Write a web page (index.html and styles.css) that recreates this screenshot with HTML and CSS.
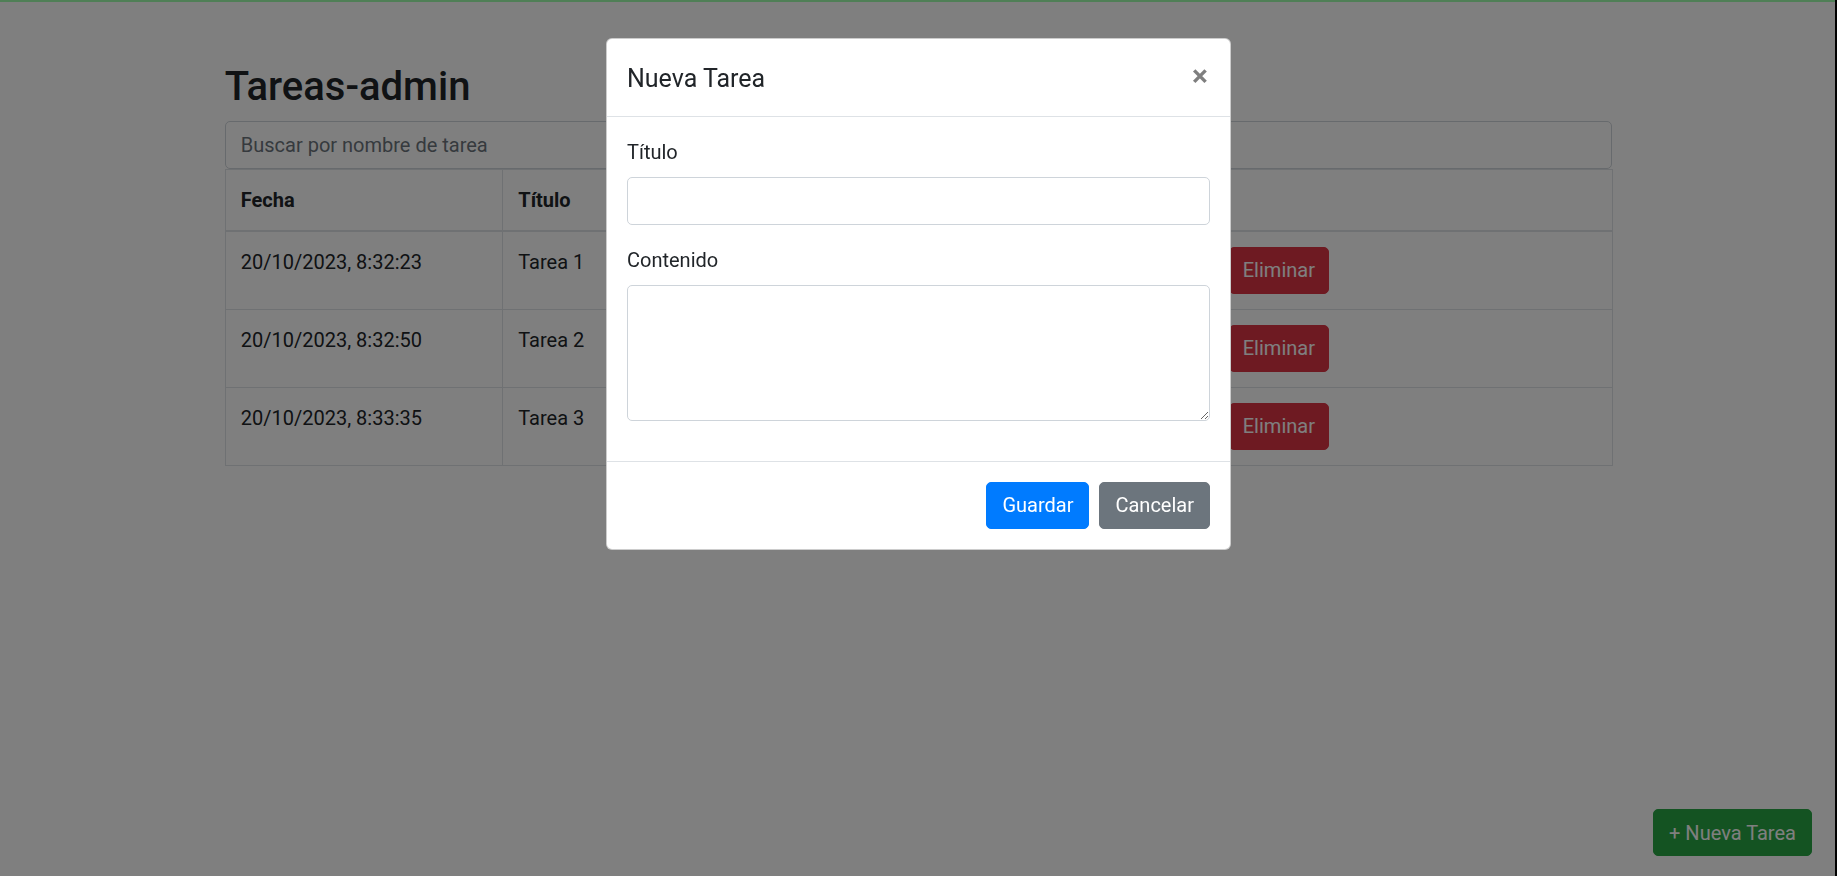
FILE: index.html
```html
<!DOCTYPE html>
<html lang="es">
<head>
<meta charset="utf-8">
<title>Tareas-admin</title>
<link rel="stylesheet" href="styles.css">
</head>
<body>
<div class="topbar"></div>
<main class="container">
  <h2 class="page-title">Tareas-admin</h2>
  <input class="form-control search" type="text" placeholder="Buscar por nombre de tarea">
  <table class="tasks">
    <colgroup>
      <col class="col-fecha">
      <col class="col-titulo">
      <col class="col-contenido">
      <col class="col-acciones">
    </colgroup>
    <thead>
      <tr><th>Fecha</th><th>Título</th><th>Contenido</th><th>Acciones</th></tr>
    </thead>
    <tbody>
      <tr>
        <td>20/10/2023, 8:32:23</td><td>Tarea 1</td><td>Contenido 1</td>
        <td><button class="btn btn-warning">Editar</button><button class="btn btn-danger">Eliminar</button></td>
      </tr>
      <tr>
        <td>20/10/2023, 8:32:50</td><td>Tarea 2</td><td>Contenido 2</td>
        <td><button class="btn btn-warning">Editar</button><button class="btn btn-danger">Eliminar</button></td>
      </tr>
      <tr>
        <td>20/10/2023, 8:33:35</td><td>Tarea 3</td><td>Contenido 3</td>
        <td><button class="btn btn-warning">Editar</button><button class="btn btn-danger">Eliminar</button></td>
      </tr>
    </tbody>
  </table>
</main>
<button class="btn btn-success fab">+ Nueva Tarea</button>

<div class="backdrop"></div>
<div class="modal">
  <div class="modal-dialog">
    <div class="modal-content">
      <div class="modal-header">
        <h5 class="modal-title">Nueva Tarea</h5>
        <button class="close" type="button">×</button>
      </div>
      <div class="modal-body">
        <div class="form-group">
          <label class="form-label">Título</label>
          <input class="form-control" type="text">
        </div>
        <div class="form-group">
          <label class="form-label">Contenido</label>
          <textarea class="form-control textarea"></textarea>
        </div>
      </div>
      <div class="modal-footer">
        <button class="btn btn-primary">Guardar</button>
        <button class="btn btn-secondary">Cancelar</button>
      </div>
    </div>
  </div>
</div>
<div class="window-edge"></div>
</body>
</html>
```

FILE: styles.css
```css
* { box-sizing: border-box; }

html, body {
  margin: 0;
  padding: 0;
}

body {
  font-family: "Segoe UI", Roboto, "Liberation Sans", Arial, sans-serif;
  font-size: 20px;
  line-height: 1.5;
  color: #212529;
  background: #fff;
  height: 876px;
  overflow: hidden;
}

.topbar {
  height: 2px;
  background: #9efeac;
}

.container {
  max-width: 1425px;
  margin: 0 auto;
  padding: 0 18.75px;
}

.page-title {
  margin: 61px 0 10px;
  font-size: 40px;
  font-weight: 500;
  line-height: 48px;
}

.form-control {
  display: block;
  width: 100%;
  height: 47.5px;
  padding: 7.5px 15px;
  font-family: inherit;
  font-size: 20px;
  line-height: 30px;
  color: #495057;
  background: #fff;
  border: 1px solid #ced4da;
  border-radius: 5px;
  outline: none;
}

.form-control::placeholder {
  color: #6c757d;
}

.tasks {
  width: 100%;
  table-layout: fixed;
  border-collapse: collapse;
  border: 1px solid #dee2e6;
}

.col-fecha { width: 277.5px; }
.col-titulo { width: 200px; }
.col-contenido { width: 405px; }
.col-acciones { width: 505px; }

.tasks th,
.tasks td {
  padding: 15px;
  text-align: left;
  vertical-align: top;
  border: 1px solid #dee2e6;
  line-height: 30px;
  white-space: nowrap;
}

.tasks th {
  font-weight: 700;
  border-bottom-width: 2px;
}

.btn {
  display: inline-block;
  padding: 7.5px 15px;
  font-family: inherit;
  font-size: 20px;
  line-height: 30px;
  font-weight: 400;
  border: 1px solid transparent;
  border-radius: 5px;
  color: #fff;
  cursor: pointer;
  vertical-align: top;
}

.btn-warning {
  width: 100px;
  margin-right: 5.5px;
  background: #ffc107;
  border-color: #ffc107;
  color: #212529;
}

.btn-danger {
  padding: 7.5px 13px;
  background: #dc3545;
  border-color: #dc3545;
}
.btn-success { background: #28a745; border-color: #28a745; }
.btn-primary { background: #007bff; border-color: #007bff; }
.btn-secondary { background: #6c757d; border-color: #6c757d; }

.fab {
  position: fixed;
  right: 25px;
  bottom: 20px;
  width: 159px;
}

.backdrop {
  position: fixed;
  inset: 0;
  background: rgba(0, 0, 0, 0.5);
  z-index: 10;
}

.modal {
  position: fixed;
  inset: 0;
  z-index: 20;
}

.modal-dialog {
  width: 625px;
  margin: 37.5px auto 0;
}

.modal-content {
  display: flex;
  flex-direction: column;
  background: #fff;
  border: 1px solid rgba(0, 0, 0, 0.2);
  border-radius: 6px;
}

.modal-header {
  display: flex;
  align-items: flex-start;
  justify-content: space-between;
  padding: 21px 20px 19px;
  border-bottom: 1px solid #dee2e6;
}

.modal-title {
  margin: 0;
  font-size: 25px;
  font-weight: 400;
  line-height: 37.5px;
}

.close {
  margin: -21px -20px -19px auto;
  padding: 20px;
  background: transparent;
  border: 0;
  font-family: inherit;
  font-size: 30px;
  font-weight: 700;
  line-height: 1;
  color: #000;
  text-shadow: 0 1px 0 #fff;
  opacity: 0.5;
  position: relative;
  top: 2px;
  left: -2px;
}

.modal-body {
  padding: 20px;
}

.form-group {
  margin-bottom: 20px;
}

.form-label {
  display: block;
  margin-bottom: 10px;
}

.textarea {
  height: 136px;
  resize: both;
}

.modal-footer {
  display: flex;
  justify-content: flex-end;
  align-items: center;
  padding: 15px;
  border-top: 1px solid #dee2e6;
}

.modal-footer .btn {
  margin: 5px;
}

.window-edge {
  position: fixed;
  top: 0;
  right: 0;
  width: 2px;
  height: 100%;
  background: #000;
  z-index: 30;
}
```
